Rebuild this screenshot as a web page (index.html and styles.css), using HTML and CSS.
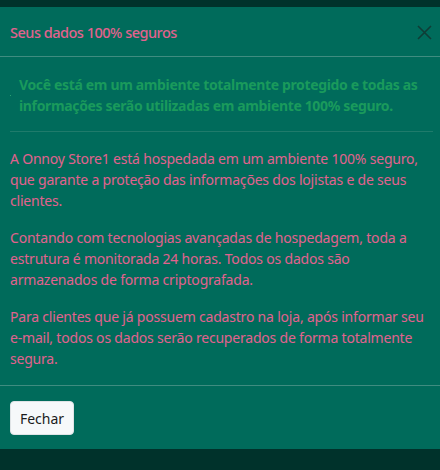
FILE: index.html
```html
<!DOCTYPE html>
<html lang="pt-BR">
<head>
<meta charset="utf-8">
<link rel="stylesheet" href="styles.css">
</head>
<body>
<div class="backdrop">
  <div class="modal">
    <div class="modal-header">
      <h5 class="modal-title">Seus dados 100% seguros</h5>
      <button class="close" aria-label="Fechar">
        <svg width="15" height="15" viewBox="0 0 15 15"><path d="M1 1 L14 14 M14 1 L1 14" stroke="#0f3d36" stroke-width="1.6" fill="none"/></svg>
      </button>
    </div>
    <div class="modal-body">
      <div class="notice">
        <span class="dot"></span>
        <p>Você está em um ambiente totalmente protegido e todas as informações serão utilizadas em ambiente 100% seguro.</p>
      </div>
      <hr class="sep">
      <p class="text">A Onnoy Store1 está hospedada em um ambiente 100% seguro, que garante a proteção das informações dos lojistas e de seus clientes.</p>
      <p class="text">Contando com tecnologias avançadas de hospedagem, toda a estrutura é monitorada 24 horas. Todos os dados são armazenados de forma criptografada.</p>
      <p class="text">Para clientes que já possuem cadastro na loja, após informar seu e-mail, todos os dados serão recuperados de forma totalmente segura.</p>
    </div>
    <div class="modal-footer">
      <button class="btn">Fechar</button>
    </div>
  </div>
</div>
</body>
</html>
```
FILE: styles.css
```css
* { box-sizing: border-box; }
html, body { margin: 0; padding: 0; }
body {
  background: #00322b;
  font-family: "Noto Sans", "Open Sans", sans-serif;
  width: 440px;
  height: 470px;
  overflow: hidden;
}
.backdrop { padding-top: 7px; }
.modal {
  background: #006b5b;
  height: 442px;
  display: flex;
  flex-direction: column;
}
.modal-header {
  height: 52px;
  display: flex;
  align-items: center;
  justify-content: space-between;
  padding: 1px 8px 0 10px;
  border-bottom: 1px solid #3f8c80;
}
.modal-title {
  margin: 0;
  font-size: 14.5px;
  font-weight: 500;
  letter-spacing: -0.5px;
  color: #e2628e;
}
.close {
  background: none;
  border: 0;
  padding: 0;
  width: 15px;
  height: 15px;
  display: flex;
}
.modal-body {
  padding: 10px 7px 0 10px;
  flex: 1;
}
.notice {
  position: relative;
  padding: 7px 0 15px 9px;
}
.dot {
  position: absolute;
  left: 0;
  top: 28px;
  width: 1px;
  height: 1px;
  background: #2aa070;
}
.notice p {
  margin: 0;
  font-size: 14px;
  line-height: 21px;
  font-weight: 700;
  letter-spacing: -0.35px;
  color: #1a9a5c;
}
.sep {
  margin: 0 0 16px;
  border: 0;
  border-top: 1px solid #1f7b6b;
}
.text {
  margin: 0 0 16px;
  font-size: 14px;
  line-height: 21px;
  letter-spacing: -0.2px;
  color: #e2628e;
}
.modal-footer {
  border-top: 1px solid #3f8c80;
  padding: 15px 10px 14px;
}
.btn {
  width: 64px;
  height: 34px;
  background: #f6f8fa;
  border: 1px solid #dfe3e6;
  border-radius: 4px;
  font-family: inherit;
  font-size: 14px;
  color: #1a1a1a;
  padding: 0;
}
```
